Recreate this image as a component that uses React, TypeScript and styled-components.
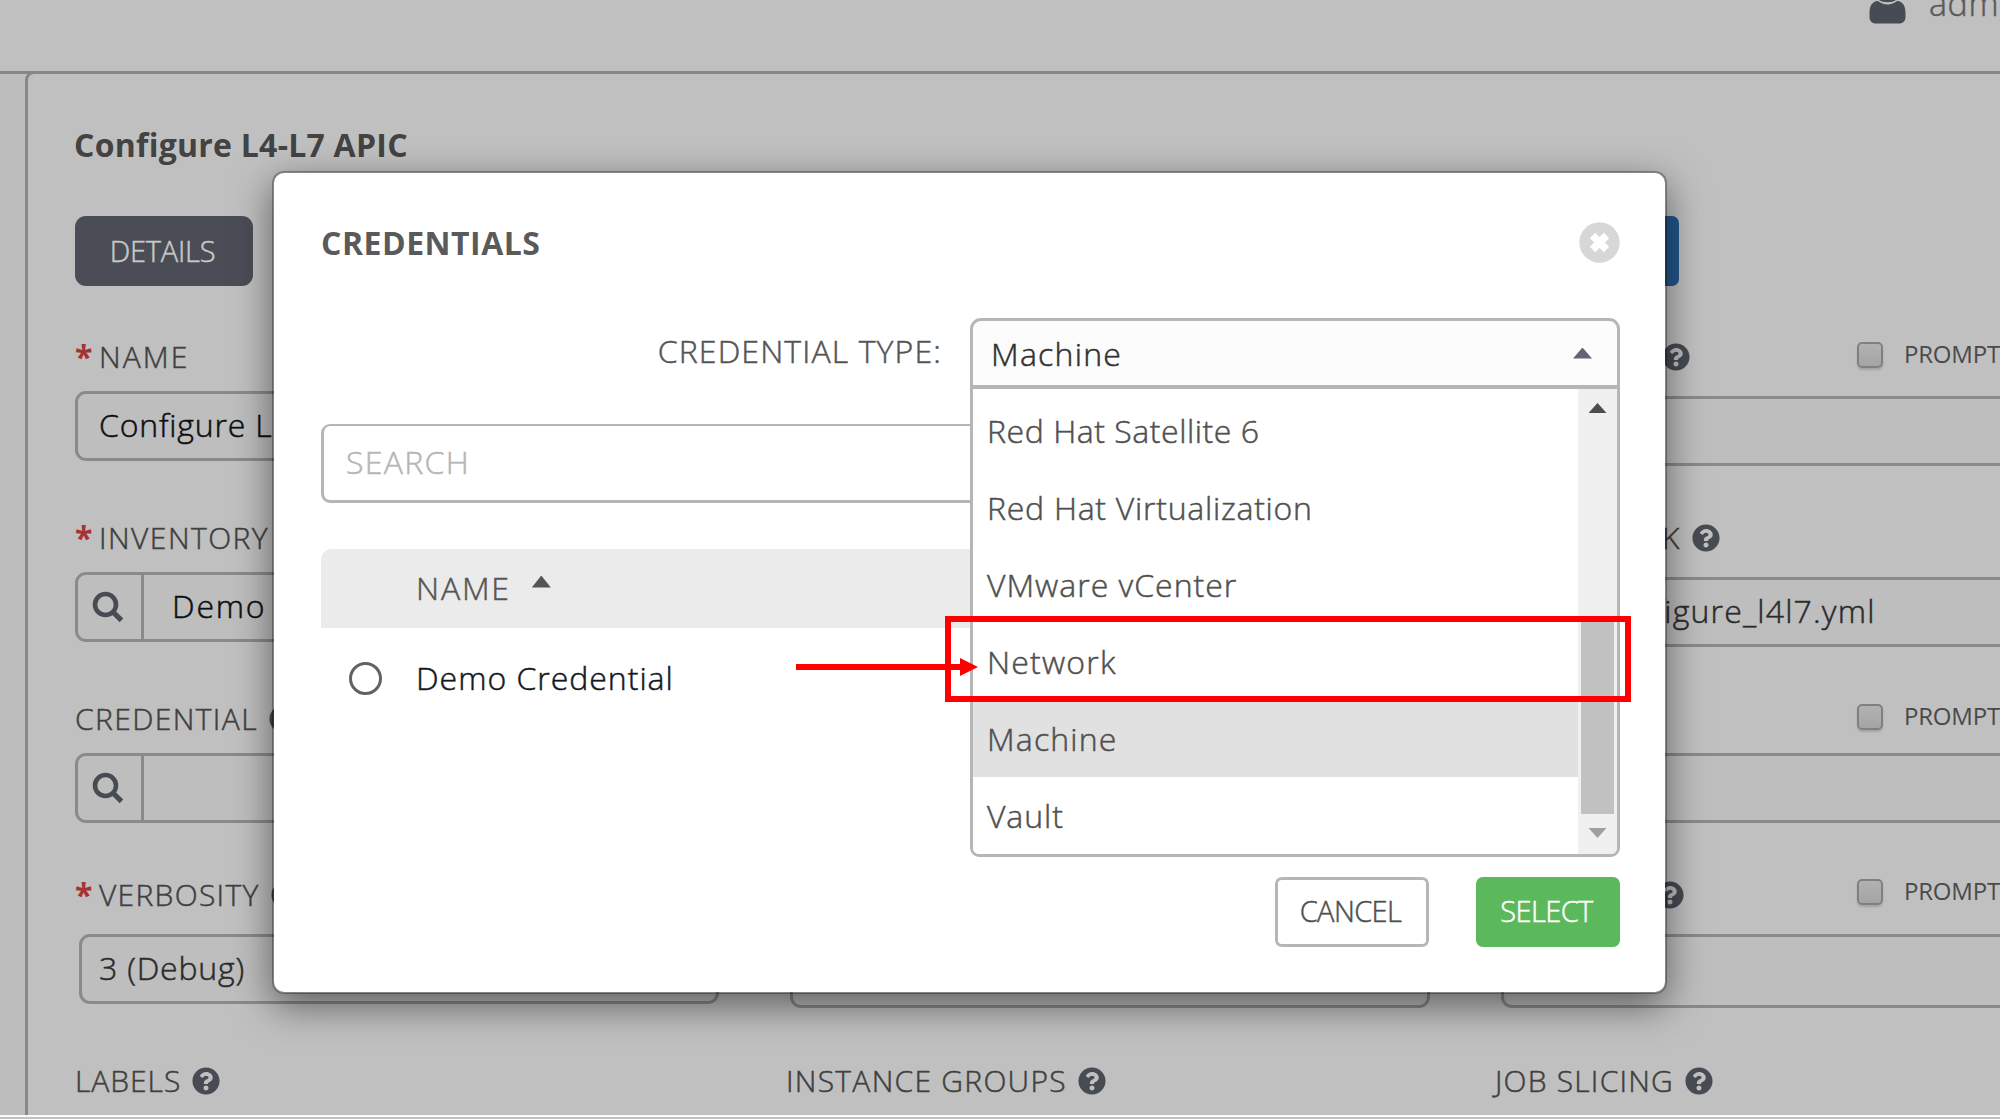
import React from "react";
import styled, { createGlobalStyle } from "styled-components";
import { FaQuestionCircle } from "react-icons/fa";

const LINE = "#8a8a8a";
const SOFT_LINE = "#b6b6b6";
const SLATE = "#474b54";

const GlobalStyle = createGlobalStyle`
  html, body { margin: 0; padding: 0; }
  body {
    width: 2000px;
    height: 1119px;
    overflow: hidden;
    font-family: "Open Sans", "Noto Sans", sans-serif;
    font-weight: 300;
    -webkit-text-stroke: 0.5px currentColor;
    background: #c0c0c0;
  }
  * { box-sizing: border-box; }
`;

const Screen = styled.div`
  position: relative;
  width: 2000px;
  height: 1119px;
  overflow: hidden;
  background: #c0c0c0;
`;

const Page = styled.div`
  display: flex;
  flex-direction: column;
  height: 1117px;
  border-bottom: 2px solid #fafafa;
  overflow: hidden;
`;

const TopBar = styled.header`
  flex: none;
  display: flex;
  align-items: flex-start;
  justify-content: flex-end;
  height: 74px;
  border-bottom: 3px solid #878787;
  overflow: hidden;
`;

const UserLink = styled.div`
  display: flex;
  align-items: flex-start;
  width: 131px;
  gap: 23px;
  white-space: nowrap;
`;

const UserName = styled.span`
  margin-top: -20px;
  font-size: 34px;
  line-height: 46px;
  letter-spacing: 0.6px;
  color: #5a5a5a;
`;

const Main = styled.main`
  flex: 1;
  display: flex;
  min-height: 0;
`;

const Gutter = styled.div`
  flex: none;
  width: 25px;
  background: #bdbdbd;
`;

const Panel = styled.section`
  flex: 1;
  min-width: 0;
  margin-top: -3px;
  padding: 48px 0 0 47px;
  border-top: 3px solid #878787;
  border-left: 3px solid #878787;
  border-top-left-radius: 9px;
  overflow: hidden;
`;

const PanelTitle = styled.h1`
  margin: 0 0 0 -1px;
  font-size: 32px;
  font-weight: 700;
  line-height: 45px;
  letter-spacing: 0.25px;
  color: #434343;
  -webkit-text-stroke: 0;
`;

const Tabs = styled.div`
  display: flex;
  justify-content: space-between;
  width: 1604px;
  margin: 49px 0 51px;
`;

const Tab = styled.button<{ $primary?: boolean }>`
  width: ${(p) => (p.$primary ? 190 : 178)}px;
  height: 70px;
  padding: 0 3px 0 0;
  border: 0;
  border-radius: ${(p) => (p.$primary ? 7 : 11)}px;
  background: ${(p) => (p.$primary ? "#23578c" : "#4a4d55")};
  color: #c8c8c8;
  font: 300 29px/68px "Open Sans", sans-serif;
  letter-spacing: -0.2px;
`;

const Form = styled.div`
  display: grid;
  grid-template-columns: repeat(3, 644px);
  grid-template-rows: 181px 181px 176px 186px 54px;
  column-gap: 67px;
`;

const Field = styled.div`
  display: flex;
  flex-direction: column;
`;

const LabelRow = styled.div<{ $indent?: number }>`
  flex: none;
  display: flex;
  align-items: center;
  height: 40px;
  margin-left: ${(p) => p.$indent ?? 0}px;
  white-space: nowrap;
`;

const Required = styled.span`
  width: 24px;
  color: #a53333;
  font-size: 32px;
  font-weight: 700;
  line-height: 40px;
  -webkit-text-stroke: 0;
`;

const LabelText = styled.span<{ $ls: number }>`
  color: #404040;
  font-size: 30px;
  line-height: 40px;
  letter-spacing: ${(p) => p.$ls}px;
`;

const HelpIcon = styled(FaQuestionCircle)`
  flex: none;
  width: 28px;
  height: 28px;
  margin-left: 11px;
  color: ${SLATE};
`;

const Prompt = styled.div<{ $dy: number }>`
  display: flex;
  align-items: center;
  gap: 21px;
  margin: ${(p) => p.$dy}px 0 0 auto;
  width: 284px;
  height: 26px;
`;

const Checkbox = styled.span`
  width: 26px;
  height: 26px;
  border: 2px solid #808080;
  border-radius: 5px;
  background: linear-gradient(#b2b2b2, #a4a4a4);
  box-shadow: 0 2px 2px rgba(0, 0, 0, 0.15);
`;

const PromptText = styled.span`
  margin-top: -2px;
  color: #4a4a4a;
  font-size: 24px;
  font-weight: 400;
  line-height: 26px;
  letter-spacing: -0.2px;
  -webkit-text-stroke: 0;
`;

const Control = styled.div<{ $top?: number; $left?: number; $height?: number; $pad?: number }>`
  flex: none;
  display: flex;
  align-items: center;
  height: ${(p) => p.$height ?? 70}px;
  margin-top: ${(p) => p.$top ?? 14}px;
  margin-left: ${(p) => p.$left ?? 0}px;
  padding-left: ${(p) => p.$pad ?? 0}px;
  border: 3px solid ${LINE};
  border-radius: 11px;
  background: #bebebe;
`;

const Value = styled.span<{ $ls: number; $strong?: boolean }>`
  margin-top: -2px;
  color: ${(p) => (p.$strong ? "#0d0f12" : "#2b2b2b")};
  font-size: 32px;
  line-height: 44px;
  letter-spacing: ${(p) => p.$ls}px;
  white-space: nowrap;
`;

const LookupButton = styled.span`
  display: flex;
  align-items: center;
  justify-content: center;
  width: 66px;
  height: 100%;
  margin-right: 28px;
  padding-right: 3px;
  border-right: 3px solid ${LINE};
`;

const Dialog = styled.div`
  position: absolute;
  left: 272px;
  top: 171px;
  display: flex;
  flex-direction: column;
  width: 1395px;
  height: 823px;
  padding: 49px 45px 45px 47px;
  border: 2px solid rgba(0, 0, 0, 0.3);
  border-radius: 12px;
  background: #fff;
  background-clip: padding-box;
  box-shadow: 0 12px 38px rgba(0, 0, 0, 0.5);
`;

const DialogHeader = styled.div`
  display: flex;
  align-items: center;
  justify-content: space-between;
  height: 41px;
`;

const DialogTitle = styled.h2`
  margin: 0;
  color: #5a5a5a;
  font-size: 32px;
  font-weight: 700;
  line-height: 41px;
  letter-spacing: 0.5px;
  -webkit-text-stroke: 0;
`;

const TypeRow = styled.div`
  display: flex;
  align-items: center;
  justify-content: flex-end;
  height: 70px;
  margin-top: 55px;
`;

const TypeLabel = styled.label`
  margin: 0 28px 4px 0;
  color: #555;
  font-size: 32px;
  line-height: 44px;
  letter-spacing: 1.12px;
`;

const Select = styled.div`
  position: relative;
  display: flex;
  align-items: center;
  justify-content: space-between;
  width: 650px;
  height: 70px;
  padding: 0 25px 0 18px;
  border: 3px solid ${SOFT_LINE};
  border-radius: 11px 11px 0 0;
  background: #fcfcfc;
`;

const SelectValue = styled.span`
  margin-top: 1px;
  color: #303030;
  font-size: 32px;
  line-height: 63px;
  letter-spacing: 1.25px;
`;

const Menu = styled.div`
  position: absolute;
  left: -3px;
  top: 64px;
  display: flex;
  width: 650px;
  height: 472px;
  border: 3px solid ${SOFT_LINE};
  border-top-width: 4px;
  border-radius: 0 0 9px 9px;
  background: #fff;
  overflow: hidden;
`;

const Options = styled.ul`
  flex: 1;
  display: flex;
  flex-direction: column;
  justify-content: flex-end;
  margin: 0;
  padding: 0;
  list-style: none;
`;

const Option = styled.li<{ $ls: number; $current?: boolean }>`
  flex: none;
  height: 77px;
  padding-left: 14px;
  background: ${(p) => (p.$current ? "#e1e1e1" : "#fff")};
  color: #505050;
  font-size: 32px;
  line-height: 78px;
  letter-spacing: ${(p) => p.$ls}px;
  white-space: nowrap;
`;

const ScrollTrack = styled.div`
  display: flex;
  flex-direction: column;
  align-items: center;
  width: 39px;
  padding: 14px 0 16px;
  background: #f0f0f0;
`;

const ScrollThumb = styled.div`
  width: 33px;
  height: 196px;
  margin: auto 1px 14px 0;
  background: #c1c1c1;
`;

const Triangle = styled.span<{ $w: number; $h: number; $color: string; $down?: boolean }>`
  flex: none;
  width: ${(p) => p.$w}px;
  height: ${(p) => p.$h}px;
  background: ${(p) => p.$color};
  clip-path: ${(p) => (p.$down ? "polygon(0 0, 100% 0, 50% 100%)" : "polygon(50% 0, 100% 100%, 0 100%)")};
`;

const SearchBox = styled.div`
  display: flex;
  align-items: center;
  height: 79px;
  margin-top: 36px;
  padding: 0 0 3px 22px;
  border: 3px solid ${SOFT_LINE};
  border-top-width: 2px;
  border-radius: 9px;
  color: #b6b6b6;
  font-size: 32px;
  letter-spacing: 1.3px;
`;

const TableHead = styled.div`
  display: flex;
  align-items: center;
  height: 79px;
  margin-top: 46px;
  padding: 0 0 2px 95px;
  border-radius: 11px 11px 0 0;
  background: #ebebeb;
  color: #555;
  font-size: 32px;
  letter-spacing: 1.8px;
`;

const SortMark = styled.span`
  display: flex;
  margin: -12px 0 0 21px;
`;

const TableRow = styled.div`
  display: flex;
  align-items: center;
  gap: 34px;
  height: 101px;
  padding-left: 28px;
  color: #14191e;
  font-size: 32px;
  letter-spacing: 0.98px;
`;

const RowName = styled.span`
  margin-top: -2px;
`;

const Radio = styled.span`
  width: 33px;
  height: 33px;
  border: 3px solid #626262;
  border-radius: 50%;
`;

const DialogFooter = styled.div`
  display: flex;
  justify-content: flex-end;
  gap: 47px;
  margin-top: auto;
`;

const Button = styled.button<{ $solid?: boolean }>`
  width: ${(p) => (p.$solid ? 144 : 154)}px;
  height: 70px;
  padding: 0 3px 3px 0;
  border: ${(p) => (p.$solid ? "0" : `3px solid ${SOFT_LINE}`)};
  border-radius: 7px;
  background: ${(p) => (p.$solid ? "#5cb85c" : "#fff")};
  color: ${(p) => (p.$solid ? "#fff" : "#505050")};
  font: 300 29px/1 "Open Sans", sans-serif;
  letter-spacing: -0.6px;
`;

const Highlight = styled.div`
  position: absolute;
  left: 945px;
  top: 616px;
  width: 686px;
  height: 86px;
  border: 6px solid #f00;
`;

const Arrow = styled.svg`
  position: absolute;
  left: 796px;
  top: 658px;
`;

const SearchIcon = () => (
  <svg width="32" height="32" viewBox="0 0 32 32" fill="none" stroke={SLATE}>
    <circle cx="13.5" cy="13.5" r="10.5" strokeWidth="4.6" />
    <path d="M20.5 20.5 L29.5 29.3" strokeWidth="5.2" />
  </svg>
);

const UserIcon = () => (
  <svg width="37" height="24" viewBox="0 0 37 24">
    <path d="M0.5 13 C0.5 6 3 1.5 9 1 C14 5.500 23 5.500 28 1 C34 1.500 36.500 6 36.500 13 V17 C36.500 21 34 23.500 30 23.500 H7 C3 23.500 .5 21 .5 17 Z" fill={SLATE} />
    <path d="M10 0 C14 3 23 3 27 0 Z" fill={SLATE} />
  </svg>
);

const CloseIcon = () => (
  <svg width="41" height="41" viewBox="0 0 41 41">
    <circle cx="20.500" cy="20.500" r="20.200" fill="#d7d7d7" />
    <path d="M13.500 13.500 L27.500 27.500 M27.500 13.500 L13.500 27.500" stroke="#fff" strokeWidth="7.500" strokeLinecap="butt" />
  </svg>
);

type LabelProps = { text: string; ls: number; required?: boolean; help?: boolean; indent?: number };

const Label = ({ text, ls, required, help, indent }: LabelProps) => (
  <LabelRow $indent={indent}>
    {required && <Required>*</Required>}
    <LabelText $ls={ls}>{text}</LabelText>
    {help && <HelpIcon />}
  </LabelRow>
);

const PromptOption = ({ dy = 0 }: { dy?: number }) => (
  <Prompt $dy={dy}>
    <Checkbox />
    <PromptText>PROMPT</PromptText>
  </Prompt>
);

const options = [
  { name: "Red Hat Satellite 6", ls: 0.55 },
  { name: "Red Hat Virtualization", ls: 0.74 },
  { name: "VMware vCenter", ls: 1.0 },
  { name: "Network", ls: 1.2 },
  { name: "Machine", ls: 1.15, current: true },
  { name: "Vault", ls: 0.9 },
];

export default function App() {
  return (
    <Screen>
      <GlobalStyle />
      <Page>
        <TopBar>
          <UserLink>
            <UserIcon />
            <UserName>adm</UserName>
          </UserLink>
        </TopBar>
        <Main>
          <Gutter />
          <Panel>
            <PanelTitle>Configure L4-L7 APIC</PanelTitle>
            <Tabs>
              <Tab>DETAILS</Tab>
              <Tab $primary />
            </Tabs>
            <Form>
              <Field>
                <Label text="NAME" ls={2.1} required />
                <Control $pad={21}>
                  <Value $ls={0.8} $strong>Configure L</Value>
                </Control>
              </Field>
              <Field />
              <Field>
                <LabelRow $indent={154}>
                  <HelpIcon />
                  <PromptOption dy={-4} />
                </LabelRow>
                <Control $top={19} />
              </Field>

              <Field>
                <Label text="INVENTORY" ls={1.45} required />
                <Control>
                  <LookupButton><SearchIcon /></LookupButton>
                  <Value $ls={1.8} $strong>Demo</Value>
                </Control>
              </Field>
              <Field />
              <Field>
                <Label text="PLAYBOOK" ls={1.35} required help />
                <Control $top={19} $pad={97}>
                  <Value $ls={1.19}>configure_l4l7.yml</Value>
                </Control>
              </Field>

              <Field>
                <Label text="CREDENTIAL" ls={1.38} help />
                <Control>
                  <LookupButton><SearchIcon /></LookupButton>
                </Control>
              </Field>
              <Field />
              <Field>
                <LabelRow>
                  <PromptOption dy={-4} />
                </LabelRow>
                <Control />
              </Field>

              <Field>
                <Label text="VERBOSITY" ls={1.3} required help />
                <Control $top={19} $left={4} $pad={17}>
                  <Value $ls={0.8}>3 (Debug)</Value>
                </Control>
              </Field>
              <Field>
                <Control $top={59} $left={4} $height={74} />
              </Field>
              <Field>
                <LabelRow $indent={148}>
                  <HelpIcon />
                  <PromptOption dy={-7} />
                </LabelRow>
                <Control $top={19} $left={4} $height={74} />
              </Field>

              <Label text="LABELS" ls={0.95} help />
              <Label text="INSTANCE GROUPS" ls={1.27} help />
              <Label text="JOB SLICING" ls={1.2} help indent={-2} />
            </Form>
          </Panel>
        </Main>
      </Page>

      <Dialog role="dialog">
        <DialogHeader>
          <DialogTitle>CREDENTIALS</DialogTitle>
          <CloseIcon />
        </DialogHeader>
        <TypeRow>
          <TypeLabel>CREDENTIAL TYPE:</TypeLabel>
          <Select>
            <SelectValue>Machine</SelectValue>
            <Triangle $w={19} $h={11} $color="#60656f" />
            <Menu>
              <Options>
                {options.map((o) => (
                  <Option key={o.name} $ls={o.ls} $current={o.current}>{o.name}</Option>
                ))}
              </Options>
              <ScrollTrack>
                <Triangle $w={18} $h={10} $color="#4d4d4d" />
                <ScrollThumb />
                <Triangle $w={18} $h={10} $color="#9f9f9f" $down />
              </ScrollTrack>
            </Menu>
          </Select>
        </TypeRow>
        <SearchBox>SEARCH</SearchBox>
        <TableHead>
          NAME
          <SortMark><Triangle $w={19} $h={12} $color="#555" /></SortMark>
        </TableHead>
        <TableRow>
          <Radio />
          <RowName>Demo Credential</RowName>
        </TableRow>
        <DialogFooter>
          <Button>CANCEL</Button>
          <Button $solid>SELECT</Button>
        </DialogFooter>
      </Dialog>

      <Highlight />
      <Arrow width="183" height="18" viewBox="0 0 183 18" fill="#f00">
        <path d="M0 6 H164 V0 L182 9 L164 18 V12 H0 Z" />
      </Arrow>
    </Screen>
  );
}
